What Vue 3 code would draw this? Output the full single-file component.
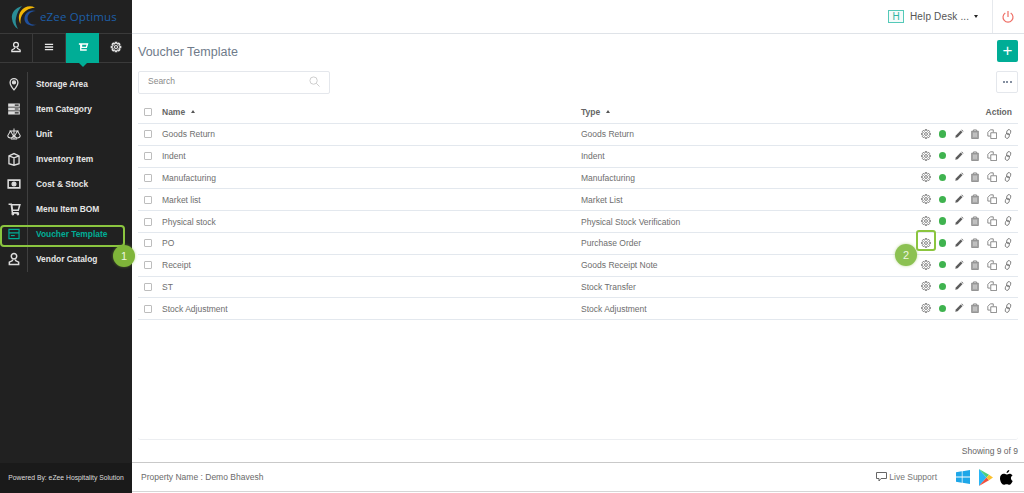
<script setup>
const tabs = ['user', 'menu', 'cart', 'gear']
const nav = [
  { label: 'Storage Area', icon: 'pin' },
  { label: 'Item Category', icon: 'server' },
  { label: 'Unit', icon: 'scale' },
  { label: 'Inventory Item', icon: 'box' },
  { label: 'Cost & Stock', icon: 'money' },
  { label: 'Menu Item BOM', icon: 'cart' },
  { label: 'Voucher Template', icon: 'voucher', active: true },
  { label: 'Vendor Catalog', icon: 'user' }
]
const rows = [
  ['Goods Return', 'Goods Return'],
  ['Indent', 'Indent'],
  ['Manufacturing', 'Manufacturing'],
  ['Market list', 'Market List'],
  ['Physical stock', 'Physical Stock Verification'],
  ['PO', 'Purchase Order'],
  ['Receipt', 'Goods Receipt Note'],
  ['ST', 'Stock Transfer'],
  ['Stock Adjustment', 'Stock Adjustment']
]
function gearPath(cx, cy, ro, ri, n) {
  const pts = []
  const step = (Math.PI * 2) / n
  for (let i = 0; i < n; i++) {
    const a = i * step
    const w = step * 0.2
    pts.push([ri, a - step / 2 + w], [ro, a - w], [ro, a + w], [ri, a + step / 2 - w])
  }
  return 'M' + pts.map(([r, a]) => `${(cx + r * Math.cos(a)).toFixed(2)} ${(cy + r * Math.sin(a)).toFixed(2)}`).join('L') + 'Z'
}
const gear = gearPath(6, 6, 5.4, 4, 8)
const tabGear = gearPath(8, 8, 6.4, 4.6, 8)
</script>

<template>
  <div class="app">
    <aside class="side">
      <div class="logo">
        <svg class="logo-mark" width="27" height="26" viewBox="0 0 27 26">
          <path d="M11 2C4 4 0 9 1 15c.5 4 2.500 8 6 10-2-4-3-7-2-11C6 9 8 5 11 2z" fill="#2a8d96" />
          <path d="M24 3.500c-5-2.500-11-1-14 3.500-3 4-2.500 9-.5 13-.3-5 .5-8 3-11C15 6 19 4 24 3.500z" fill="#f2b705" />
          <path d="M25 7c-4-1.500-8 0-10.500 3.500-2 4-1 8 2.500 10 2.500 1.500 6 1.500 9 0-3.500.5-6 0-8-2-2-3-2-6 0-8.500 1.500-1.800 4-2.700 7-3z" fill="#1f4f9c" />
        </svg>
        <span class="logo-text">eZee Optimus</span>
      </div>
      <div class="tabs">
        <div v-for="t in tabs" :key="t" class="tab" :class="{ on: t === 'cart' }">
          <svg v-if="t === 'user'" class="ic" viewBox="0 0 16 16" stroke-width="1.700"><circle cx="8" cy="5" r="3.200" /><path d="M6 8.500v1.500L2.500 12v2h11v-2L10 10V8.500" /></svg>
          <svg v-else-if="t === 'menu'" class="ic" viewBox="0 0 16 16"><path d="M2.500 4.500h11M2.500 8h11M2.500 11.500h11" stroke-width="1.900" /></svg>
          <svg v-else-if="t === 'cart'" class="ic" viewBox="0 0 16 16"><path d="M14 4H6v4.500h6.500zM2.500 4H5v8h8" stroke-width="1.800" /></svg>
          <svg v-else class="ic" viewBox="0 0 16 16" stroke-width="1.600"><path :d="tabGear" /><circle cx="8" cy="8" r="2" /></svg>
        </div>
      </div>
      <nav class="nav">
        <div v-for="n in nav" :key="n.label" class="nav-row" :class="{ active: n.active }">
          <span class="nav-ic">
            <svg class="ic big" viewBox="0 0 18 18" stroke-width="1.500">
              <template v-if="n.icon === 'pin'"><path d="M9 16.500C6 13 4 10 4 7a5 5 0 0 1 10 0c0 3-2 6-5 9.500z" stroke-width="1.700" /><circle cx="9" cy="7" r="2" fill="currentColor" /></template>
              <template v-else-if="n.icon === 'server'"><path d="M1.500 2h15v4h-15zM1.500 7h15v4h-15zM1.500 12h15v4h-15z" fill="currentColor" stroke="none" /><path d="M10 4h5M10 9h5M10 14h5" stroke="#212121" /></template>
              <template v-else-if="n.icon === 'scale'"><path d="M9 2v13M5 15.500h8M3 5h12M4.500 5L1 11a3.500 3 0 0 0 7 0zM13.500 5L10 11a3.500 3 0 0 0 7 0z" stroke-width="1.300" /></template>
              <template v-else-if="n.icon === 'box'"><path d="M2.500 5L9 2l6.500 3v10L9 17l-6.500-2zM2.500 5L9 7.500 15.500 5M9 7.500V17" stroke-width="1.700" /></template>
              <template v-else-if="n.icon === 'money'"><path d="M1.500 4h15v10h-15z" stroke-width="2" /><circle cx="9" cy="9" r="2.500" fill="currentColor" /></template>
              <template v-else-if="n.icon === 'cart'"><path d="M16.500 3.500H6l1 7h7.500zM2 3h3.500l1.500 11h8" stroke-width="2" /><circle cx="7.500" cy="15.500" r="1" /><circle cx="14" cy="15.500" r="1" /></template>
              <template v-else-if="n.icon === 'voucher'"><path d="M2.500 3h13v12h-13zM2.500 7.500h13" stroke-width="1.500" /><path d="M5 11h5" /></template>
              <template v-else><circle cx="9" cy="5.500" r="3.500" stroke-width="1.900" /><path d="M7 9.500v1.500L3 13v3h12v-3l-4-2V9.500" stroke-width="1.900" /></template>
            </svg>
          </span>
          <span class="nav-label">{{ n.label }}</span>
        </div>
      </nav>
      <div class="powered">Powered By: eZee Hospitality Solution</div>
      <div class="hl hl-nav"></div>
      <div class="step step-1">1</div>
    </aside>

    <div class="main">
      <header class="top">
        <span class="h-badge">H</span>
        <span class="desk">Help Desk ...</span>
        <span class="caret"></span>
        <span class="power">
          <svg width="14" height="14" viewBox="0 0 14 14" fill="none" stroke="#ef6f66" stroke-width="1.200"><path d="M4.300 3a5 5 0 1 0 5.400 0M7 1v6" /></svg>
        </span>
      </header>

      <section class="content">
        <div class="title-row">
          <h1>Voucher Template</h1>
          <button class="add">+</button>
        </div>
        <div class="tools">
          <div class="search">
            <span>Search</span>
            <svg width="11" height="11" viewBox="0 0 12 12" fill="none" stroke="#c9c9c9" stroke-width="1"><circle cx="5" cy="5" r="4" /><path d="M8 8l3.500 3.500" /></svg>
          </div>
          <button class="more"><i></i><i></i><i></i></button>
        </div>

        <div class="table">
          <div class="tr head">
            <span class="check"></span>
            <span class="c-name">Name <b class="sort"></b></span>
            <span class="c-type">Type <b class="sort"></b></span>
            <span class="c-act">Action</span>
          </div>
          <div v-for="r in rows" :key="r[0]" class="tr">
            <span class="check"></span>
            <span class="c-name">{{ r[0] }}</span>
            <span class="c-type">{{ r[1] }}</span>
            <span class="acts">
              <span class="cell"><svg class="ai gear" viewBox="0 0 12 12"><path :d="gear" /><circle cx="6" cy="6" r="1.700" /></svg></span>
              <span class="cell"><span class="dot"></span></span>
              <span class="cell"><svg class="ai" viewBox="0 0 12 12"><path d="M1.500 10.500l.7-2.800 5.800-5.800 2.100 2.100-5.800 5.800z" fill="#5c5c5c" stroke="none" /><path d="M8.800 1.100l.5-.5 2.100 2.100-.5.500z" fill="#5c5c5c" stroke="none" /></svg></span>
              <span class="cell"><svg class="ai" viewBox="0 0 12 12"><path d="M2 2.500h8v9H2z" fill="#a8a8a8" stroke="#7d7d7d" /><path d="M4.300 2.500V1h3.400v1.500" stroke="#7d7d7d" /><path d="M4.500 4.500v5M6 4.500v5M7.500 4.500v5" stroke="#eee" stroke-width=".6" /></svg></span>
              <span class="cell"><svg class="ai" viewBox="0 0 12 12"><path d="M4 8.500H1V4l3-3h3.500v3" /><path d="M4.500 4.500h7v7h-7z" fill="#fff" /></svg></span>
              <span class="cell"><svg class="ai" viewBox="0 0 12 12"><g transform="rotate(20 6 6)"><rect x="3.700" y=".6" width="4.600" height="6.200" rx="2.300" /><rect x="3.700" y="5.200" width="4.600" height="6.200" rx="2.300" /></g></svg></span>
            </span>
          </div>
          <div class="hl hl-gear"></div>
          <div class="step step-2">2</div>
        </div>

        <div class="panel-foot">Showing 9 of 9</div>
      </section>

      <footer class="foot">
        <span class="prop">Property Name : Demo Bhavesh</span>
        <span class="live">
          <svg width="11" height="10" viewBox="0 0 11 10" fill="none" stroke="#666"><path d="M.5.500h10v6H5L3 9V6.500H.5z" /></svg>
          Live Support
        </span>
        <svg class="store" width="14" height="14" viewBox="0 0 14 14" fill="#1ea7e8"><path d="M0 2.200L5.800 1.300v5.300H0zM6.500 1.200L14 0v6.600H6.500zM0 7.400h5.800v5.300L0 11.800zM6.500 7.400H14V14l-7.500-1.200z" /></svg>
        <svg class="store" width="14" height="17" viewBox="0 0 14 16" preserveAspectRatio="none"><path d="M0 0l7.500 8L0 16z" fill="#29b6f6" /><path d="M0 0l10 5.500L7.500 8z" fill="#4cd07d" /><path d="M0 16l10-5.500L7.500 8z" fill="#f0503f" /><path d="M10 5.500L14 8l-4 2.500L7.500 8z" fill="#fbc02d" /></svg>
        <svg class="store" width="13" height="15" viewBox="0 0 13 15" fill="#000"><path d="M9.300 0c.1 1.500-1.200 3-2.700 3C6.400 1.600 7.900.2 9.300 0zM12.700 11c-.7 1.800-2 3.800-3.300 3.800-1 0-1.500-.6-2.800-.6s-1.800.6-2.800.6C2 14.800 0 11.500 0 8.300 0 5.400 1.800 3.800 3.700 3.800c1.100 0 2.100.7 2.900.7s1.700-.8 3-.8c1 0 2.200.5 3 1.600-2.400 1.500-2 4.700.1 5.700z" /></svg>
      </footer>
    </div>
  </div>
</template>

<style>
html, body { margin: 0; background: #fff; }
</style>

<style scoped>
* { box-sizing: border-box; }
.app {
  width: 1024px; height: 493px; display: flex; overflow: hidden;
  font-family: "Liberation Sans", Arial, sans-serif; color: #666; background: #fff;
}
.ic, .ai { fill: none; stroke: currentColor; }
.side {
  width: 132px; background: #212121; display: flex; flex-direction: column; position: relative; flex: none;
}
.logo { height: 33px; display: flex; align-items: center; padding-left: 11px; }
.logo-mark { margin-right: 2px; flex: none; }
.logo-text { font-size: 11.500px; color: #1d5fa8; font-family: "Open Sans", sans-serif; white-space: nowrap; letter-spacing: .15px; }
.tabs { height: 30px; display: flex; border-top: 1px solid #3a3a3a; border-bottom: 1px solid #3a3a3a; }
.tab {
  width: 33px; display: flex; align-items: center; justify-content: center; color: #e8e8e8;
  border-right: 1px solid #3a3a3a; position: relative; padding-bottom: 3px;
}
.tab:last-child { border-right: 0; }
.tab.on { background: #00ad96; color: #fff; border-right: 0; margin-top: -1px; margin-bottom: -1px; }
.tab.on::after {
  content: ""; position: absolute; left: 50%; bottom: -4px; margin-left: -4px;
  border: 4px solid transparent; border-bottom: 0; border-top-color: #00ad96;
}
.tab .ic { width: 12px; height: 12px; }
.nav { flex: 1; padding-top: 8px; position: relative; }
.nav::before { content: ""; position: absolute; left: 27px; top: 9px; height: 200px; width: 1px; background: #3f3f3f; }
.nav-row { height: 25px; display: flex; align-items: center; color: #e6e6e6; }
.nav-ic { width: 27px; display: flex; justify-content: center; color: #ddd; }
.ic.big { width: 14px; height: 14px; }
.nav-label { margin-left: 9px; font-size: 8.400px; font-weight: 700; white-space: nowrap; }
.active, .active .nav-ic { color: #00ad96; }
.powered {
  height: 30px; background: #1a1a1a; color: #dcdcdc; font-size: 6.800px; display: flex;
  align-items: center; justify-content: center; white-space: nowrap; padding-bottom: 2px;
}
.hl { position: absolute; border: 2.500px solid #8bc53f; }
.hl-nav { left: 0; top: 225px; width: 125px; height: 22px; border-radius: 4px; }
.step {
  position: absolute; width: 22px; height: 22px; border-radius: 50%; background: #7fb539;
  color: #eef6e0; font-size: 11px; display: flex; align-items: center; justify-content: center;
  box-shadow: 0 0 3px rgba(127,181,57,.5);
}
.step-1 { left: 113px; top: 245px; }

.main { flex: 1; display: flex; flex-direction: column; min-width: 0; }
.top {
  height: 34px; border-bottom: 1px solid #dfe3e8; display: flex; align-items: center; flex: none;
  padding-top: 0;
}
.h-badge {
  margin-left: 756px; width: 16px; height: 13px; border: 1px solid #54c9b8; color: #2fb5a2;
  font-size: 10px; display: flex; align-items: center; justify-content: center; background: #f4fbfa;
}
.desk { margin-left: 6px; font-size: 10px; color: #555; white-space: nowrap; letter-spacing: .15px; }
.caret {
  margin-left: 5px; border: 2.500px solid transparent; border-top: 3px solid #222; border-bottom: 0;
}
.power {
  margin-left: auto; width: 32px; height: 33px; border-left: 1px solid #e6e9ed;
  display: flex; align-items: center; justify-content: center; padding-right: 1px;
}
.content { flex: 1; padding: 0 6px; display: flex; flex-direction: column; min-height: 0; }
.title-row { display: flex; justify-content: space-between; align-items: center; height: 33px; margin-top: 1px; }
h1 { margin: 0; font-size: 12.500px; font-weight: 400; color: #6f7b8a; }
.add {
  width: 21px; height: 22px; border: 0; border-radius: 2px; background: #00ad96; color: #fff;
  font-size: 17px; line-height: 20px; padding: 0; margin-top: -2px; font-family: inherit;
}
.tools { display: flex; justify-content: space-between; align-items: flex-start; margin-top: 3px; }
.search {
  width: 192px; height: 23px; border: 1px solid #e4e7ec; border-radius: 2px; display: flex;
  align-items: center; justify-content: space-between; padding: 0 9px 3px 9px; font-size: 8.500px; color: #8a8a8a;
}
.more {
  width: 22px; height: 22px; background: #fff; border: 1px solid #e4e7ec; border-radius: 2px;
  display: flex; align-items: center; justify-content: center; gap: 1.500px; padding: 0;
}
.more i { width: 2px; height: 2px; background: #5b6a80; border-radius: 50%; }
.table { position: relative; height: 339px; border-bottom: 1px solid #eceef1; border-radius: 0 0 3px 3px; flex: none; margin-top: 7px; }
.tr {
  height: 21.800px; display: flex; align-items: center; border-bottom: 1px solid #e3e8ee;
  font-size: 8.500px; color: #6e6e6e; position: relative;
}
.head { height: 23px; font-weight: 700; color: #666; }
.check { width: 8px; height: 8px; border: 1px solid #bdbdbd; margin-left: 6px; border-radius: 1px; background: #fff; flex: none; }
.c-name { position: absolute; left: 24px; }
.c-type { position: absolute; left: 443px; }
.c-act { position: absolute; right: 6px; }
.sort {
  display: inline-block; margin-left: 3px; vertical-align: 2px;
  border: 2.500px solid transparent; border-top: 0; border-bottom: 3px solid #555;
}
.acts { position: absolute; right: 1.800px; top: 0; bottom: 0; display: flex; align-items: center; color: #666; padding-bottom: 1px; }
.cell { width: 16.400px; display: flex; justify-content: center; }
.ai { width: 10px; height: 10px; stroke-width: .9; }
.ai.gear { stroke-width: 1; }
.dot { width: 7.500px; height: 7.500px; border-radius: 50%; background: #3fb34f; }
.hl-gear { left: 778px; top: 129px; width: 20px; height: 21px; border-radius: 3px; border-width: 2.500px; }
.step-2 { left: 757px; top: 143px; width: 22px; height: 22px; background: #8cc152; }
.panel-foot { font-size: 8.500px; text-align: right; color: #666; padding-top: 6px; }
.foot {
  height: 30px; flex: none; border-top: 1px solid #c9c9c9; border-bottom: 1px solid #d6d6d6;
  display: flex; align-items: center; padding: 0 11px 0 9px; margin-bottom: 1px; margin-top: auto;
}
.prop { font-size: 8.500px; color: #6a6a6a; }
.live { margin-left: auto; font-size: 8.500px; color: #757575; display: flex; align-items: center; gap: 2px; margin-right: 19px; }
.store { margin-left: 9px; }
.store:last-child { margin-left: 7px; }
.live + .store { margin-left: 0; }
</style>
